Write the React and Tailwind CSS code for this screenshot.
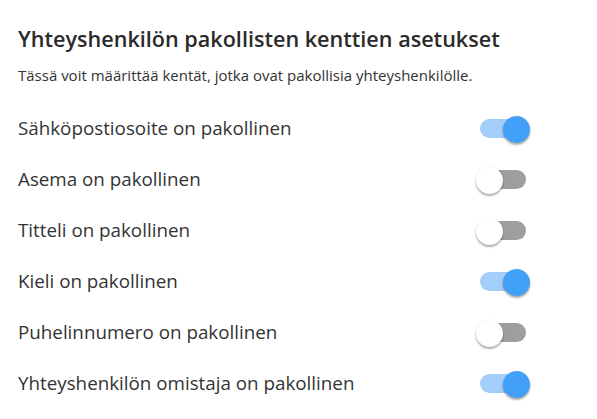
import React, { useState } from 'react';

const fields = [
  { id: 'email', label: 'Sähköpostiosoite on pakollinen', on: true },
  { id: 'position', label: 'Asema on pakollinen', on: false },
  { id: 'title', label: 'Titteli on pakollinen', on: false },
  { id: 'language', label: 'Kieli on pakollinen', on: true },
  { id: 'phone', label: 'Puhelinnumero on pakollinen', on: false },
  { id: 'owner', label: 'Yhteyshenkilön omistaja on pakollinen', on: true },
];

function Toggle({ checked, onChange }) {
  return (
    <button
      type="button"
      onClick={onChange}
      className="relative w-[56px] h-[28px] flex items-center justify-center shrink-0"
    >
      <span className={`w-[46px] h-[19px] rounded-full ${checked ? 'bg-[#a3cefa]' : 'bg-[#9e9e9e]'}`} />
      <span
        className={`absolute top-[1px] w-[27px] h-[27px] rounded-full shadow-[0_2px_2px_rgba(0,0,0,0.25),0_1px_3px_rgba(0,0,0,0.15)] ${checked ? 'left-[28px] bg-[#42a0f9]' : 'left-[1px] bg-white'}`}
      />
    </button>
  );
}

export default function App() {
  const [values, setValues] = useState(fields.map(f => f.on));

  return (
    <div className="w-[597px] h-[419px] bg-white pl-[18px] pt-[24px] font-['Open_Sans',sans-serif] text-[#333]">
      {/* Header */}
      <h2 className="text-[21.6px] font-semibold leading-[30px] text-[#2b2b2b]">
        Yhteyshenkilön pakollisten kenttien asetukset
      </h2>
      <p className="text-[15px] leading-[20px] mt-[11px] text-[#333]">
        Tässä voit määrittää kentät, jotka ovat pakollisia yhteyshenkilölle.
      </p>

      {/* Toggle list */}
      <div className="flex flex-col mt-[18px] w-[513px]">
        {fields.map((f, i) => (
          <div key={f.id} className="flex items-center justify-between h-[51px]">
            <span className="text-[18.8px] text-[#333]">{f.label}</span>
            <Toggle
              checked={values[i]}
              onChange={() => setValues(v => v.map((x, j) => (j === i ? !x : x)))}
            />
          </div>
        ))}
      </div>
    </div>
  );
}
